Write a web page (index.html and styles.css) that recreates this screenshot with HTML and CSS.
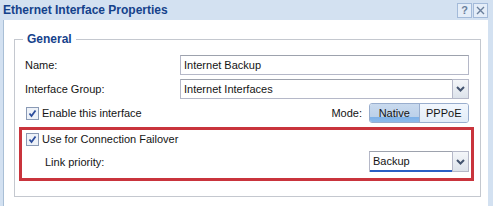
FILE: index.html
```html
<!DOCTYPE html>
<html lang="en">
<head>
  <meta charset="UTF-8">
  <title>Ethernet Interface Properties</title>
  <link rel="stylesheet" href="styles.css">
</head>
<body>
  <div class="window">
    <div class="titlebar">
      <span class="title">Ethernet Interface Properties</span>
      <div class="tools">
        <span class="tool">?</span>
        <span class="tool close">
          <svg width="9" height="9" viewBox="0 0 9 9"><path d="M1 1 L8 8 M8 1 L1 8" stroke="#6a7f9c" stroke-width="1.4" fill="none"/></svg>
        </span>
      </div>
    </div>

    <div class="content">
      <fieldset class="group">
        <legend>General</legend>

        <div class="row">
          <label class="label">Name:</label>
          <div class="field text">Internet Backup</div>
        </div>

        <div class="row">
          <label class="label">Interface Group:</label>
          <div class="field combo">
            <span class="value">Internet Interfaces</span>
            <span class="trigger">
              <svg width="9" height="6" viewBox="0 0 9 6"><path d="M1 1 L4.5 4.5 L8 1" stroke="#44546f" stroke-width="2" fill="none"/></svg>
            </span>
          </div>
        </div>

        <div class="row">
          <label class="check">
            <span class="box">
              <svg width="13" height="13" viewBox="0 0 13 13"><rect x="0.5" y="0.5" width="12" height="12" fill="#eef2f8" stroke="#8a9ab5"/><path d="M3.5 6.5 L5.5 9 L9.5 3.5" stroke="#2c4d9c" stroke-width="1.8" fill="none"/></svg>
            </span>
            Enable this interface
          </label>
          <div class="mode">
            <span class="mode-label">Mode:</span>
            <div class="segmented">
              <span class="seg pressed">Native</span>
              <span class="seg">PPPoE</span>
            </div>
          </div>
        </div>

        <div class="highlight">
          <label class="check">
            <span class="box">
              <svg width="13" height="13" viewBox="0 0 13 13"><rect x="0.5" y="0.5" width="12" height="12" fill="#eef2f8" stroke="#8a9ab5"/><path d="M3.5 6.5 L5.5 9 L9.5 3.5" stroke="#2c4d9c" stroke-width="1.8" fill="none"/></svg>
            </span>
            Use for Connection Failover
          </label>
          <div class="row sub">
            <label class="label indent">Link priority:</label>
            <div class="field combo small focus">
              <span class="value">Backup</span>
              <span class="trigger">
                <svg width="9" height="6" viewBox="0 0 9 6"><path d="M1 1 L4.5 4.5 L8 1" stroke="#44546f" stroke-width="2" fill="none"/></svg>
              </span>
            </div>
          </div>
        </div>
      </fieldset>
    </div>
  </div>
</body>
</html>
```

FILE: styles.css
```css
body {
  margin: 0;
  overflow: hidden;
  font-family: "Liberation Sans", Arial, sans-serif;
  font-size: 11px;
  color: #141414;
}

.window {
  width: 493px;
  height: 206px;
  background: #d3e1f1;
  display: flex;
  flex-direction: column;
}

.titlebar {
  height: 20px;
  display: flex;
  align-items: center;
  justify-content: space-between;
  padding: 0 5px 0 3px;
}

.title {
  font-weight: bold;
  font-size: 12px;
  color: #15428b;
}

.tools {
  display: flex;
  gap: 1px;
}

.tool {
  width: 13px;
  height: 13px;
  border: 1px solid #a3bad9;
  background: #e4edf8;
  color: #6a7f9c;
  font-size: 11px;
  font-weight: bold;
  display: flex;
  align-items: center;
  justify-content: center;
  line-height: 1;
}

.content {
  flex: 1;
  margin: 0 5px 0 3px;
  border-left: 1px solid #a9bfd6;
  background: #fff;
}

.group {
  margin: 12px 7px 0 10px;
  padding: 0 11px 15px 10px;
  border: 1px solid #c4c8cf;
  display: flex;
  flex-direction: column;
  gap: 4px;
}

.group legend {
  margin-left: -2px;
  padding: 0 4px;
  font-weight: bold;
  font-size: 12px;
  color: #15428b;
  margin-bottom: 9px;
}

.row {
  display: flex;
  align-items: center;
  height: 20px;
  justify-content: space-between;
}

.label {
  width: 155px;
}

.field {
  height: 20px;
  box-sizing: border-box;
  border: 1px solid #b5b8c8;
  border-top-color: #9da2ad;
  background: #fff;
  display: flex;
  align-items: center;
}

.text {
  flex: 1;
  padding-left: 3px;
}

.combo {
  flex: 1;
}

.combo .value {
  flex: 1;
  padding-left: 3px;
}

.trigger {
  width: 17px;
  height: 20px;
  margin: -1px -1px -1px 0;
  box-sizing: border-box;
  border: 1px solid #b5b8c8;
  background: linear-gradient(#f4f6f9, #dde3eb);
  display: flex;
  align-items: center;
  justify-content: center;
}

.check {
  display: flex;
  align-items: center;
  gap: 3px;
  margin-left: 1px;
}

.box {
  display: flex;
}

.mode {
  display: flex;
  align-items: center;
  gap: 7px;
}

.segmented {
  display: flex;
  width: 100px;
  height: 20px;
  box-sizing: border-box;
  border: 1px solid #99aece;
  border-radius: 3px;
  overflow: hidden;
}

.seg {
  flex: 1;
  display: flex;
  align-items: center;
  justify-content: center;
  background: linear-gradient(#f2f7fd, #e2ecf8);
}

.seg.pressed {
  border-right: 1px solid #99aece;
  background: linear-gradient(#c9daee 0, #bcd1ea 70%, #7fb2e8 75%, #8cbaea 100%);
}

.highlight {
  margin: 0 -5px 0 -6px;
  padding: 2px 2px 6px 4px;
  border: 3px solid #c9343c;
  display: flex;
  flex-direction: column;
  gap: 5px;
}

.highlight .check {
  height: 14px;
  margin-left: 0;
}

.row.sub {
  height: 21px;
}

.indent {
  margin-left: 19px;
}

.combo.small {
  flex: none;
  width: 100px;
  height: 21px;
}

.combo.small .trigger {
  height: 21px;
}

.focus .value {
  align-self: stretch;
  display: flex;
  align-items: center;
  border-bottom: 2px solid #2a5fc4;
  margin-bottom: -1px;
}
```
